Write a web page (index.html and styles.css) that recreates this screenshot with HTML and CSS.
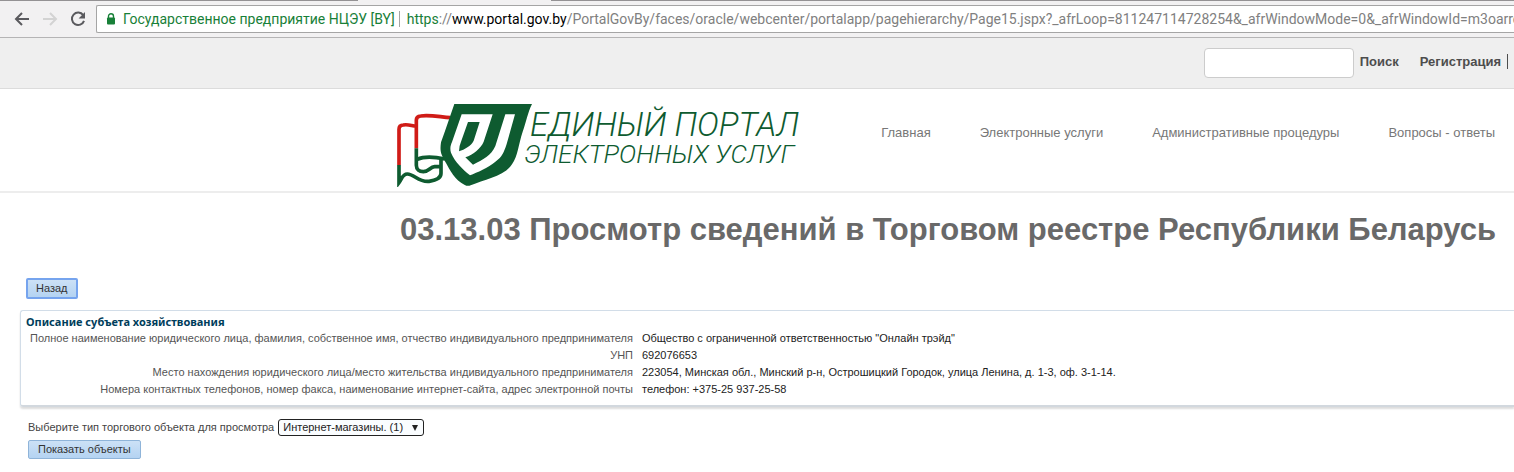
FILE: index.html
```html
<!DOCTYPE html>
<html lang="ru">
<head>
<meta charset="utf-8">
<title>Единый портал электронных услуг</title>
<link rel="stylesheet" href="styles.css">
</head>
<body>
<div class="browser">
  <div class="tab-edge"><span class="edge-left"></span><span class="edge-right"></span></div>
  <div class="toolbar">
    <button class="tool" aria-label="Back"><svg width="16" height="16" viewBox="0 0 16 16"><path d="M15 8H2M8 2L2 8l6 6" fill="none" stroke="#5a5a5e" stroke-width="2"/></svg></button>
    <button class="tool" aria-label="Forward" disabled><svg width="16" height="16" viewBox="0 0 16 16"><path d="M1 8h13M8 2l6 6-6 6" fill="none" stroke="#d3d3d3" stroke-width="2"/></svg></button>
    <button class="tool" aria-label="Reload"><svg width="16" height="16" viewBox="0 0 16 16"><path d="M13.2 4.2A6.2 6.2 0 1 0 14 9.8" fill="none" stroke="#5a5a5e" stroke-width="2"/><path d="M15 1v6.4H8.6z" fill="#5a5a5e"/></svg></button>
    <div class="address">
      <svg class="lock" width="10" height="12" viewBox="0 0 10 12"><path d="M2.5 5V3.2a2.5 2.5 0 0 1 5 0V5" fill="none" stroke="#188038" stroke-width="1.4"/><rect x="1" y="4.4" width="8" height="7" rx="1" fill="#188038"/></svg>
      <span class="owner">Государственное предприятие НЦЭУ [BY]</span>
      <span class="url"><span class="scheme">https</span>://<span class="host">www.portal.gov.by</span>/PortalGovBy/faces/oracle/webcenter/portalapp/pagehierarchy/Page15.jspx?_afrLoop=811247114728254&amp;_afrWindowMode=0&amp;_afrWindowId=m3oarrcg</span>
    </div>
  </div>
</div>

<div class="userbar">
  <input class="search" type="text" aria-label="Поиск">
  <button class="search-go">Поиск</button>
  <a class="register" href="#">Регистрация</a>
</div>

<header class="site-header">
  <a class="logo" href="#">
    <svg width="136" height="84" viewBox="36 24 408 252">
      <g fill="none" stroke-width="11">
        <path d="M42 211V103Q42 90 55 90C70 87 80 93 94 94M94 160V75Q94 64 107 63C135 59 165 66 196 68" stroke="#d01c17"/>
        <path d="M42 210V263C52 250 52 237 67 237C88 237 100 262 132 259C155 256 168 250 168 235V192M94 160V211C94 224 103 230 115 230C132 230 135 216 149 215L168 214M97 193C120 182 147 185 180 192" stroke="#0e5b30"/>
      </g>
      <path d="M208 27H441C428 53 424 80 413 110C400 150 399 181 381 208C357 244 298 253 257 271Q248 275 238 269C211 257 193 223 183 204C168 177 164 171 168 142C181 106 194 67 208 27Z" fill="#0e5b30"/>
      <path d="M230 58H323L296 140C288 160 265 178 241 187L264 209C294 194 319 181 331 153L361 58H390L365 147C356 174 351 185 333 199C308 219 277 233 255 241C232 222 209 200 198 173C194 160 197 150 201 141Z" fill="#fff"/>
      <path d="M249 81H284L266 137C258 153 239 163 222 169Q222 153 228 140Z" fill="#0e5b30"/>
    </svg>
    <span class="logo-text"><span class="logo-top">ЕДИНЫЙ ПОРТАЛ</span><span class="logo-bottom">ЭЛЕКТРОННЫХ УСЛУГ</span></span>
  </a>
  <nav class="menu">
    <a href="#">Главная</a>
    <a href="#">Электронные услуги</a>
    <a href="#">Административные процедуры</a>
    <a href="#">Вопросы - ответы</a>
  </nav>
</header>

<main class="content">
  <h1>03.13.03 Просмотр сведений в Торговом реестре Республики Беларусь</h1>
  <button class="btn btn-focus">Назад</button>
  <section class="panel">
    <h2>Описание субъета хозяйствования</h2>
    <table class="details">
      <tr><th scope="row">Полное наименование юридического лица, фамилия, собственное имя, отчество индивидуального предпринимателя</th><td>Общество с ограниченной ответственностью "Онлайн трэйд"</td></tr>
      <tr><th scope="row">УНП</th><td>692076653</td></tr>
      <tr><th scope="row">Место нахождения юридического лица/место жительства индивидуального предпринимателя</th><td>223054, Минская обл., Минский р-н, Острошицкий Городок, улица Ленина, д. 1-3, оф. 3-1-14.</td></tr>
      <tr><th scope="row">Номера контактных телефонов, номер факса, наименование интернет-сайта, адрес электронной почты</th><td>телефон: +375-25 937-25-58</td></tr>
    </table>
  </section>
  <div class="picker">
    <label for="kind">Выберите тип торгового объекта для просмотра</label>
    <span class="select-box"><select id="kind"><option>Интернет-магазины. (1)</option></select></span>
  </div>
  <button class="btn btn-show">Показать объекты</button>
</main>
</body>
</html>
```

FILE: styles.css
```css
* { box-sizing: border-box; }
body { margin: 0; background: #fff; color: #333; font-family: "Liberation Sans", Arial, sans-serif; overflow: hidden; }
a { color: inherit; text-decoration: none; }
button { font: inherit; color: inherit; cursor: pointer; }

.browser { background: #f2f1f2; border-bottom: 1px solid #b5b4b5; }
.tab-edge { display: flex; height: 1px; }
.edge-left { width: 358px; background: #949294; }
.edge-right { flex: 1; margin-left: 193px; background: #949294; }
.toolbar { display: flex; align-items: center; padding: 4px 0 4px 14px; }
.tool { display: flex; flex: none; width: 16px; padding: 0; margin-right: 12px; border: 0; background: none; }
.address { display: flex; flex: 1; align-items: center; min-width: 0; height: 28px; margin-left: -2px; padding-left: 9px; background: #fff; border: 1px solid #a5a5a5; border-right: 0; border-radius: 2px 0 0 2px; overflow: hidden; white-space: nowrap; font: 14px Roboto, sans-serif; }
.lock { flex: none; margin-right: 7px; }
.owner { padding-right: 4px; margin-right: 7px; border-right: 1px solid #a5a5a5; line-height: 16px; color: #188038; }
.url { color: #808080; }
.scheme { color: #188038; }
.host { color: #000; }

.userbar { display: flex; justify-content: flex-end; align-items: flex-start; height: 51px; padding: 10px 6px 0 0; background: #efefef; border-bottom: 1px solid #dcdcdc; font-size: 13px; font-weight: bold; line-height: 15px; color: #4d4d4d; }
.search { width: 150px; height: 30px; border: 1px solid #ccc; border-radius: 4px; background: #fff; }
.search-go { margin: 6px 21px 0 6px; padding: 0; border: 0; background: none; }
.register { margin-top: 6px; padding-right: 6px; border-right: 1px solid #4d4d4d; }

.site-header { display: flex; justify-content: space-between; height: 104px; padding: 14px 19px 0 397px; border-bottom: 2px solid #ededed; }
.logo { display: flex; color: #0e5b30; }
.logo svg { flex: none; }
.logo-text { display: flex; flex-direction: column; margin-left: -9px; font-family: Roboto, sans-serif; font-style: italic; font-weight: 300; white-space: nowrap; }
.logo-top { padding: 6px 0 0 6px; font-size: 33px; line-height: 32px; }
.logo-bottom { font-size: 26px; line-height: 26px; }
.menu { display: flex; gap: 49px; padding-top: 22px; font-size: 13px; line-height: 15px; color: #777; white-space: nowrap; }

.content { font-family: "Liberation Sans", Arial, sans-serif; font-size: 11px; line-height: 17px; }
h1 { margin: 18px 0 0 400px; font: bold 31px/38px "Liberation Sans", Arial, sans-serif; color: #696969; white-space: nowrap; }
.btn { display: block; height: 19px; padding: 0 9px; border: 1px solid #8fb4d9; border-radius: 2px; background: linear-gradient(#cce1f6, #b4d3f2); line-height: 15px; color: #333; }
.btn-focus { height: 21px; margin: 29px 0 0 26px; padding: 0 8px; border: 2px solid #76a4ee; }
.btn-show { margin: 4px 0 0 28px; }
.panel { margin: 11px 0 0 20px; padding: 2px 0 7px 5px; border: 1px solid #d2dde8; border-right: 0; border-bottom: 2px solid #d2d8de; border-radius: 3px 0 0 3px; box-shadow: 0 2px 2px #ddd; }
h2 { margin: 0; font: bold 11px/17px "Noto Sans", Tahoma, sans-serif; color: #003d5b; }
.details { border-collapse: collapse; white-space: nowrap; }
.details th { width: 607px; padding: 0; text-align: right; font-weight: normal; color: #555; }
.details td { padding: 0 0 0 9px; color: #222; }
.picker { display: flex; align-items: center; gap: 4px; margin: 12px 0 0 28px; color: #444; }
.select-box { display: grid; align-items: center; }
.select-box select { grid-area: 1 / 1; width: 146px; height: 17px; padding: 0 4px; border: 1px solid #222; border-radius: 3px; background: #fafdff; appearance: none; font: inherit; line-height: 15px; color: #222; }
.select-box::after { content: ""; grid-area: 1 / 1; justify-self: end; margin-right: 6px; border: 3px solid transparent; border-top: 6px solid #222; border-bottom: 0; pointer-events: none; }
```
